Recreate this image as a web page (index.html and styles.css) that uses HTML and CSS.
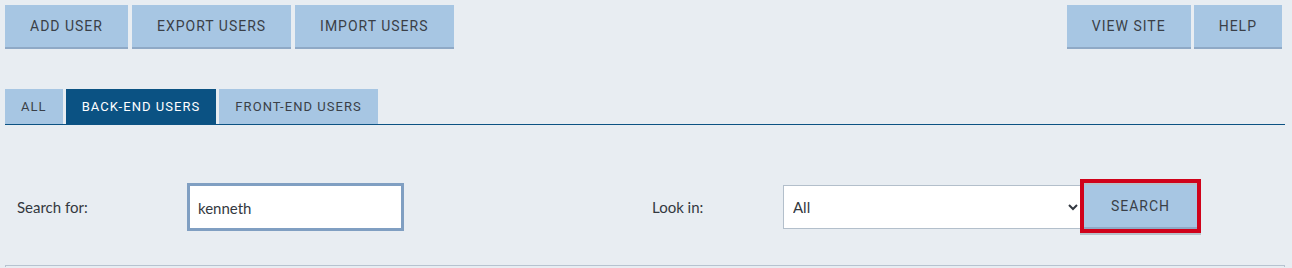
FILE: index.html
```html
<!DOCTYPE html>
<html>
<head>
<meta charset="utf-8">
<link rel="stylesheet" href="styles.css">
</head>
<body>
<div class="page">
  <div class="toolbar">
    <div class="group">
      <a class="btn">Add User</a>
      <a class="btn">Export Users</a>
      <a class="btn">Import Users</a>
    </div>
    <div class="group right">
      <a class="btn">View Site</a>
      <a class="btn">Help</a>
    </div>
  </div>
  <div class="tabs">
    <a class="tab">All</a>
    <a class="tab active">Back-end Users</a>
    <a class="tab">Front-end Users</a>
  </div>
  <div class="search">
    <label class="lbl lbl-for">Search for:</label>
    <input class="field" type="text" value="kenneth">
    <label class="lbl lbl-in">Look in:</label>
    <select class="select"><option>All</option></select>
    <button class="search-btn">Search</button>
  </div>
  <div class="results"></div>
</div>
</body>
</html>
```
FILE: styles.css
```css
* { box-sizing: border-box; }
html, body { margin: 0; padding: 0; }
body {
  background: #e8edf2;
  width: 1292px;
  height: 268px;
  overflow: hidden;
  font-family: Lato, "Open Sans", sans-serif;
}
.page { padding: 5px 7px 0 5px; }
.toolbar {
  display: flex;
  justify-content: space-between;
  padding-right: 3px;
}
.group { display: flex; gap: 4px; }
.group.right { gap: 3px; }
.btn {
  display: flex;
  align-items: center;
  justify-content: center;
  height: 44px;
  padding: 0 25px;
  background: #a7c6e3;
  border-bottom: 2px solid #8fa9c6;
  color: #3a3f47;
  font-family: Roboto, "DejaVu Sans", sans-serif;
  font-size: 14px;
  letter-spacing: 1px;
  text-transform: uppercase;
}
.tabs {
  display: flex;
  gap: 3px;
  margin-top: 40px;
  border-bottom: 1px solid #0c5283;
  height: 36px;
}
.tab {
  display: flex;
  align-items: center;
  padding: 0 16px;
  height: 35px;
  background: #a7c6e3;
  color: #3a3f47;
  font-family: Roboto, "DejaVu Sans", sans-serif;
  font-size: 13px;
  letter-spacing: 1.05px;
  text-transform: uppercase;
}
.tab.active { background: #0b5283; color: #fff; }
.search {
  display: flex;
  align-items: center;
  height: 140px;
  padding-left: 12px;
  padding-top: 24px;
}
.lbl { color: #333840; font-size: 15px; }
.lbl-for { width: 170px; }
.lbl-in { width: 131px; margin-left: 248px; }
.field {
  width: 217px;
  height: 48px;
  border: 3px solid #809fc2;
  background: #fff;
  padding: 2px 8px 0 8px;
  font-family: Lato, "Open Sans", sans-serif;
  font-size: 15px;
  color: #333840;
  outline: none;
  text-decoration: underline wavy #e02020;
  text-decoration-skip-ink: none;
  text-underline-offset: 3px;
  text-decoration-thickness: 1px;
}
.select {
  width: 299px;
  height: 44px;
  margin-top: -1px;
  border: 1px solid #b3bfcb;
  background: #fff;
  padding: 0 5px;
  font-family: Lato, "Open Sans", sans-serif;
  font-size: 15px;
  color: #333840;
  border-radius: 0;
}
.search-btn {
  width: 121px;
  height: 54px;
  margin-left: -2px;
  margin-top: -2px;
  border: 4px solid #d0021b;
  box-shadow: 0 2px 0 #b9c1c9;
  background: #a7c6e3;
  background-clip: padding-box;
  padding: 0;
  position: relative;
  color: #3a3f47;
  font-family: Roboto, "DejaVu Sans", sans-serif;
  font-size: 14px;
  letter-spacing: 1px;
  text-transform: uppercase;
  outline: none;
}
.search-btn::before {
  content: "";
  position: absolute;
  left: 0; right: 0; top: 0;
  height: 2px;
  background: #b7c0c9;
}
.search-btn::after {
  content: "";
  position: absolute;
  left: 0; right: 0; bottom: 0;
  height: 2px;
  background: #8fa9c6;
}
.results {
  height: 2px;
  border: 1px solid #b6c3d0;
  border-bottom: none;
}
```
